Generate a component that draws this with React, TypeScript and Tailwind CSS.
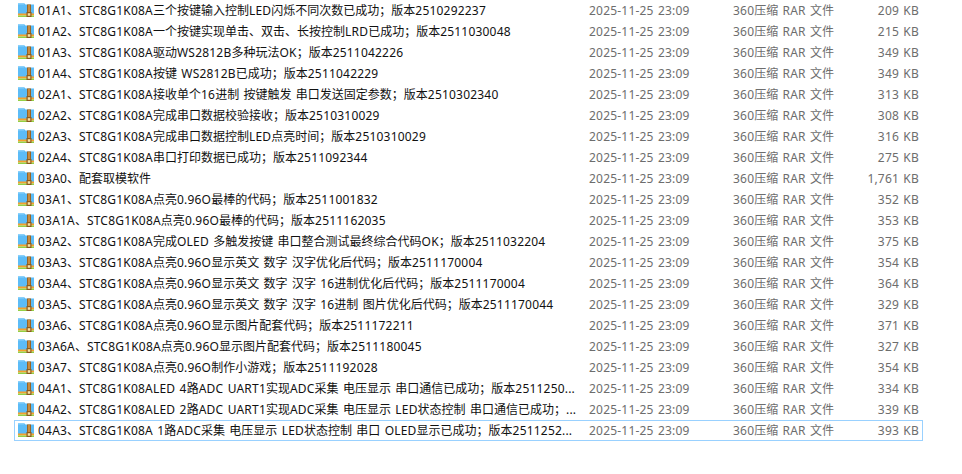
const rows = [
  ['01A1、STC8G1K08A三个按键输入控制LED闪烁不同次数已成功；版本2510292237', '209 KB'],
  ['01A2、STC8G1K08A一个按键实现单击、双击、长按控制LRD已成功；版本2511030048', '215 KB'],
  ['01A3、STC8G1K08A驱动WS2812B多种玩法OK；版本2511042226', '349 KB'],
  ['01A4、STC8G1K08A按键 WS2812B已成功；版本2511042229', '349 KB'],
  ['02A1、STC8G1K08A接收单个16进制 按键触发 串口发送固定参数；版本2510302340', '313 KB'],
  ['02A2、STC8G1K08A完成串口数据校验接收；版本2510310029', '308 KB'],
  ['02A3、STC8G1K08A完成串口数据控制LED点亮时间；版本2510310029', '316 KB'],
  ['02A4、STC8G1K08A串口打印数据已成功；版本2511092344', '275 KB'],
  ['03A0、配套取模软件', '1,761 KB'],
  ['03A1、STC8G1K08A点亮0.96O最棒的代码；版本2511001832', '352 KB'],
  ['03A1A、STC8G1K08A点亮0.96O最棒的代码；版本2511162035', '353 KB'],
  ['03A2、STC8G1K08A完成OLED 多触发按键 串口整合测试最终综合代码OK；版本2511032204', '375 KB'],
  ['03A3、STC8G1K08A点亮0.96O显示英文 数字 汉字优化后代码；版本2511170004', '354 KB'],
  ['03A4、STC8G1K08A点亮0.96O显示英文 数字 汉字 16进制优化后代码；版本2511170004', '364 KB'],
  ['03A5、STC8G1K08A点亮0.96O显示英文 数字 汉字 16进制 图片优化后代码；版本2511170044', '329 KB'],
  ['03A6、STC8G1K08A点亮0.96O显示图片配套代码；版本2511172211', '371 KB'],
  ['03A6A、STC8G1K08A点亮0.96O显示图片配套代码；版本2511180045', '327 KB'],
  ['03A7、STC8G1K08A点亮0.96O制作小游戏；版本2511192028', '354 KB'],
  ['04A1、STC8G1K08ALED 4路ADC UART1实现ADC采集 电压显示 串口通信已成功；版本2511250...', '334 KB'],
  ['04A2、STC8G1K08ALED 2路ADC UART1实现ADC采集 电压显示 LED状态控制 串口通信已成功；...', '339 KB'],
  ['04A3、STC8G1K08A 1路ADC采集 电压显示 LED状态控制 串口 OLED显示已成功；版本2511252...', '393 KB'],
];

// latin runs sit a bit wider than the CJK ones
function Label({ text }: { text: string }) {
  return (
    <>
      {text.split(/([\x20-\x7e]+)/).map((part, i) =>
        /[\x20-\x7e]/.test(part) ? (
          <span key={i} className="tracking-[0.2px] [word-spacing:1px]">{part}</span>
        ) : (
          <span key={i}>{part}</span>
        ),
      )}
    </>
  );
}

function RarIcon() {
  return (
    <svg width="16" height="16" viewBox="0 0 16 16" className="shrink-0 mt-[-1px]">
      <path d="M0 1 H6 L7.5 2.5 H16 V12 H0 Z" fill="#5cbcf7" />
      <rect x="0" y="1" width="6" height="1.5" fill="#8ad0fa" />
      <rect x="0" y="11.5" width="16" height="2" fill="#f5a02c" />
      <rect x="0" y="13.5" width="16" height="1.5" fill="#93cf45" />
      <rect x="9" y="2.5" width="4" height="9" fill="#9a6424" />
      <rect x="10.3" y="2.5" width="1.4" height="8" fill="#d99a4a" />
      <rect x="8.5" y="10" width="5" height="5" fill="#8a5a1c" />
      <rect x="9.7" y="11.2" width="2.6" height="2.6" fill="#f8e2a4" />
    </svg>
  );
}

export default function App() {
  return (
    <div className="w-[962px] h-[474px] bg-white overflow-hidden font-['Noto_Sans','Noto_Sans_CJK_SC',sans-serif] text-[12px]">
      <div className="ml-[14px] w-[909px]">
        {rows.map(([name, size], i) => (
          <div
            key={name}
            className={`flex items-center h-[21px] border pl-[3px] pr-[3px] ${i === rows.length - 1 ? 'border-[#99d1ff]' : 'border-transparent'}`}
          >
            <RarIcon />
            <span className="ml-[4px] w-[551px] shrink-0 truncate text-[#111]"><Label text={name} /></span>
            <span className="w-[144px] shrink-0 text-[#6d6d6d]"><Label text="2025-11-25 23:09" /></span>
            <span className="w-[115px] shrink-0 text-[#6d6d6d]"><Label text="360压缩 RAR 文件" /></span>
            <span className="flex-1 text-right text-[#6d6d6d]"><Label text={size} /></span>
          </div>
        ))}
      </div>
    </div>
  );
}
